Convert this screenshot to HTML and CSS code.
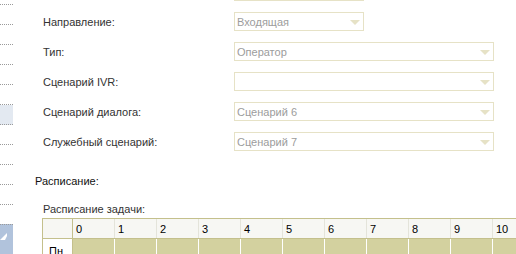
FILE: index.html
```html
<!DOCTYPE html>
<html lang="ru">
<head>
    <meta charset="UTF-8">
    <link rel="stylesheet" href="styles.css">
    <title>Задача</title>
</head>
<body>
    <div class="page">
        <div class="strip">
            <div class="strip-item first"></div>
            <div class="strip-item"></div>
            <div class="strip-item"></div>
            <div class="strip-item"></div>
            <div class="strip-item"></div>
            <div class="strip-item"></div>
            <div class="strip-item light"></div>
            <div class="strip-item"></div>
            <div class="strip-item"></div>
            <div class="strip-item"></div>
            <div class="strip-item"></div>
            <div class="strip-item"></div>
            <div class="strip-item blue">
                <svg width="13" height="16" viewBox="0 0 13 16"><polygon points="0,15 5,15 7,11 7,8" fill="#fff"/></svg>
            </div>
        </div>

        <div class="content">
            <div class="top-field"></div>

            <div class="form">
                <div class="row">
                    <span class="label">Направление:</span>
                    <div class="field short"><span>Входящая</span><i class="arrow"></i></div>
                </div>
                <div class="row">
                    <span class="label">Тип:</span>
                    <div class="field"><span>Оператор</span><i class="arrow"></i></div>
                </div>
                <div class="row">
                    <span class="label">Сценарий IVR:</span>
                    <div class="field"><span></span><i class="arrow"></i></div>
                </div>
                <div class="row">
                    <span class="label">Сценарий диалога:</span>
                    <div class="field"><span>Сценарий 6</span><i class="arrow"></i></div>
                </div>
                <div class="row">
                    <span class="label">Служебный сценарий:</span>
                    <div class="field"><span>Сценарий 7</span><i class="arrow"></i></div>
                </div>
            </div>

            <div class="section-title">Расписание:</div>
            <div class="sub-title">Расписание задачи:</div>

            <table class="schedule">
                <colgroup>
                    <col class="day-col">
                    <col span="11" class="hour-col">
                </colgroup>
                <tr class="head">
                    <th class="day"></th>
                    <th>0</th><th>1</th><th>2</th><th>3</th><th>4</th><th>5</th>
                    <th>6</th><th>7</th><th>8</th><th>9</th><th>10</th>
                </tr>
                <tr class="body">
                    <td class="day">Пн</td>
                    <td></td><td></td><td></td><td></td><td></td><td></td>
                    <td></td><td></td><td></td><td></td><td></td>
                </tr>
            </table>
        </div>
    </div>
</body>
</html>
```

FILE: styles.css
```css
body {
    margin: 0;
    background: #fff;
    font-family: "Liberation Sans", Arial, sans-serif;
    font-size: 11px;
    color: #333;
    overflow: hidden;
}

.page {
    display: flex;
    height: 254px;
    overflow: hidden;
}

.strip {
    width: 13px;
    flex: none;
    display: flex;
    flex-direction: column;
    margin-top: -15px;
}

.strip-item {
    height: 19px;
    border-bottom: 1px dotted #9a9a9a;
    flex: none;
}

.strip-item.light {
    background: #e3e9f1;
}

.strip-item.blue {
    height: 29px;
    background: #b1c3dc;
    border-top: 1px dotted #9a9a9a;
    margin-top: -1px;
    display: flex;
    align-items: flex-start;
}

.strip-item.blue svg {
    display: block;
}

.content {
    flex: 1;
    padding-left: 22px;
    min-width: 0;
}

.top-field {
    margin-left: 199px;
    width: 130px;
    height: 1px;
    background: #e6e2c6;
}

.form {
    display: flex;
    flex-direction: column;
    gap: 11px;
    margin-top: 11px;
}

.row {
    display: flex;
    align-items: center;
    padding-left: 8px;
}

.label {
    width: 191px;
    flex: none;
}

.field {
    box-sizing: border-box;
    width: 260px;
    height: 19px;
    border: 1px solid #e6e2c6;
    display: flex;
    align-items: center;
    justify-content: space-between;
    padding: 0 3px 0 2px;
    color: #9c9c9c;
}

.field.short {
    width: 130px;
}

.arrow {
    width: 0;
    height: 0;
    border-left: 5px solid transparent;
    border-right: 5px solid transparent;
    border-top: 5px solid #e6e2c6;
    margin-top: 1px;
}

.section-title {
    margin-top: 24px;
    color: #111;
}

.sub-title {
    margin-top: 16px;
    padding-left: 8px;
}

.schedule {
    width: 492px;
    margin-top: 3px;
    margin-left: 7px;
    border-collapse: collapse;
    table-layout: fixed;
    color: #000;
}

.day-col {
    width: 30px;
}

.hour-col {
    width: 42px;
}

.schedule tr {
    height: 20px;
}

.schedule th,
.schedule td {
    padding: 0 0 0 3px;
    text-align: left;
    font-weight: normal;
}

.schedule .head th {
    background: #f7f7f3;
    border-top: 1px solid #c4c08c;
    border-bottom: 1px solid #c4c08c;
    border-left: 1px solid #e4e4da;
}

.schedule .body td {
    background: #d3d19f;
    border-left: 1px solid #fff;
    padding-top: 4px;
}

.schedule .day {
    padding-left: 6px;
}

.schedule .head .day,
.schedule .body .day {
    border-left: 1px solid #c4c08c;
    border-right: 1px solid #c4c08c;
}

.schedule .body .day {
    background: #fff;
}
```
